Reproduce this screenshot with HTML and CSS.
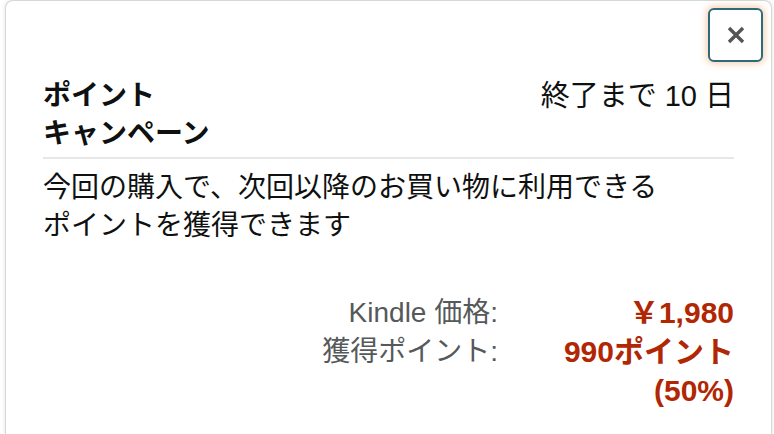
FILE: index.html
```html
<!DOCTYPE html>
<html lang="ja">
<head>
    <meta charset="UTF-8">
    <meta name="viewport" content="width=device-width, initial-scale=1.0">
    <title>ポイントキャンペーン</title>
    <link rel="stylesheet" href="styles.css">
</head>
<body>

    <div class="popover">
        <div class="popover-top">
            <button class="close-button" aria-label="閉じる">
                <svg width="20" height="20" viewBox="0 0 20 20">
                    <path d="M3 3 L17 17 M17 3 L3 17" stroke="#555" stroke-width="3.4" stroke-linecap="butt"/>
                </svg>
            </button>
        </div>

        <div class="popover-body">
            <div class="campaign-header">
                <div class="campaign-title">ポイント<br>キャンペーン</div>
                <div class="campaign-ends">終了まで 10 日</div>
            </div>

            <p class="campaign-text">今回の購入で、次回以降のお買い物に利用できる<br>ポイントを獲得できます</p>

            <div class="price-table">
                <div class="price-label">Kindle 価格:</div>
                <div class="price-value">￥1,980</div>
                <div class="price-label">獲得ポイント:</div>
                <div class="price-value">990ポイント<br>(50%)</div>
            </div>
        </div>
    </div>

</body>
</html>
```

FILE: styles.css
```css
body {
    font-family: "Liberation Sans", "Noto Sans CJK JP", sans-serif;
    background-color: #fff;
    color: #0f1111;
    margin: 0;
    padding: 0;
    overflow: hidden;
}

.popover {
    margin-left: 5px;
    width: 765px;
    height: 433px;
    border: 1px solid #d5d9d9;
    border-bottom: none;
    border-radius: 8px 8px 0 0;
    box-shadow: 0 0 4px rgba(0, 0, 0, 0.12);
    background-color: #fff;
}

.popover-top {
    display: flex;
    justify-content: flex-end;
    padding: 7px 8px 0 0;
}

.close-button {
    width: 55px;
    height: 54px;
    display: flex;
    align-items: center;
    justify-content: center;
    background-color: #fff;
    border: 2px solid #2d6a7c;
    border-radius: 6px;
    box-shadow: 0 0 6px 2px rgba(231, 129, 40, 0.35);
    padding: 0;
    cursor: pointer;
}

.popover-body {
    padding: 15px 37px 0 37px;
    font-size: 28px;
    line-height: 38px;
}

.campaign-header {
    display: flex;
    justify-content: space-between;
    padding-bottom: 4px;
    border-bottom: 2px solid #e7e7e7;
}

.campaign-title {
    font-weight: bold;
}

.campaign-ends {
    font-size: 29px;
}

.campaign-text {
    margin: 10px 0 0 0;
}

.price-table {
    display: grid;
    grid-template-columns: 1fr 236px;
    margin-top: 48px;
    text-align: right;
    line-height: 39px;
}

.price-label {
    color: #565959;
}

.price-value {
    color: #b12704;
    font-weight: bold;
    font-size: 30px;
}
```
